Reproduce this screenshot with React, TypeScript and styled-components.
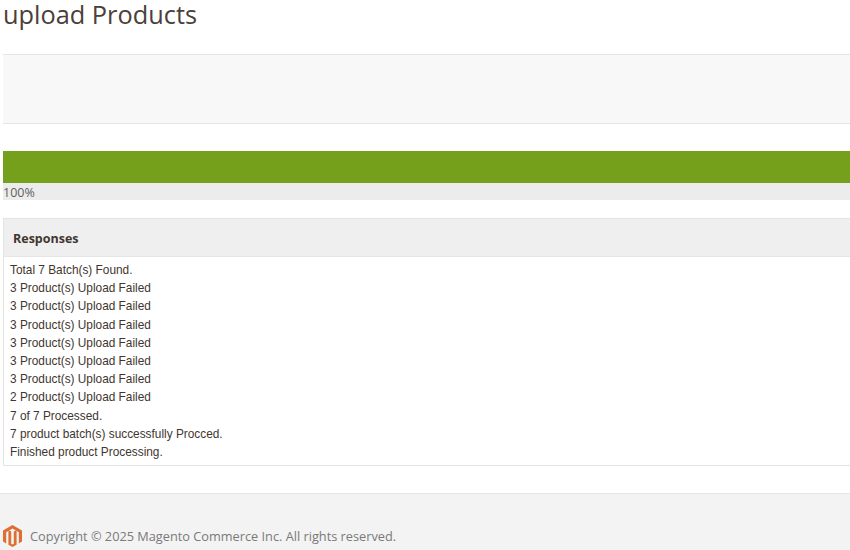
import { createGlobalStyle, styled } from "styled-components";

const messages = [
  "Total 7 Batch(s) Found.",
  "3 Product(s) Upload Failed",
  "3 Product(s) Upload Failed",
  "3 Product(s) Upload Failed",
  "3 Product(s) Upload Failed",
  "3 Product(s) Upload Failed",
  "3 Product(s) Upload Failed",
  "2 Product(s) Upload Failed",
  "7 of 7 Processed.",
  "7 product batch(s) successfully Procced.",
  "Finished product Processing.",
];

const GlobalStyle = createGlobalStyle`
  html, body {
    margin: 0;
    padding: 0;
    background: #fff;
    overflow: hidden;
  }
`;

const Page = styled.div`
  width: 850px;
  height: 550px;
  overflow: hidden;
  display: flex;
  flex-direction: column;
`;

const Main = styled.main`
  padding-left: 3px;
  display: flex;
  flex-direction: column;
`;

const Title = styled.h1`
  margin: 0;
  height: 54px;
  font: 400 25.35px/28px "Open Sans", sans-serif;
  color: #4a403a;
`;

const ActionBar = styled.div`
  height: 68px;
  background: #f8f8f8;
  border-top: 1px solid #e6e6e6;
  border-bottom: 1px solid #e6e6e6;
`;

const Progress = styled.div`
  margin-top: 27px;
  background: #ececec;
`;

const ProgressFill = styled.div`
  height: 32px;
  background: #75a01c;
`;

const ProgressLabel = styled.div`
  height: 17px;
  font: 400 12.5px/19px "Open Sans", sans-serif;
  color: #5f5f5f;
`;

const Panel = styled.section`
  margin-top: 18px;
  border: 1px solid #e3e3e3;
  border-right: 0;
  height: 248px;
  box-sizing: border-box;
`;

const PanelHeader = styled.h2`
  margin: 0;
  height: 38px;
  box-sizing: border-box;
  padding: 12px 0 0 9px;
  background: #efefef;
  border-bottom: 1px solid #e6e6e6;
  font: 700 12.5px/16px "Open Sans", sans-serif;
  color: #41362f;
`;

const PanelBody = styled.div`
  padding: 4px 0 0 6px;
`;

const Message = styled.div`
  font: 400 11.85px/18.2px "Liberation Sans", Arial, sans-serif;
  color: #41362f;
`;

const Footer = styled.footer`
  margin-top: 27px;
  flex: 1;
  display: flex;
  align-items: center;
  gap: 8px;
  padding: 27px 0 0 3px;
  box-sizing: border-box;
  background: #f3f3f3;
  border-top: 1px solid #e6e6e6;
`;

const Copyright = styled.span`
  font: 400 12.75px/18px "Open Sans", sans-serif;
  color: #7a7a7a;
`;

function MagentoLogo() {
  return (
    <svg width="19" height="22" viewBox="0 0 19 22" aria-hidden="true">
      <path
        fill="#dd6f35"
        d="M9.5 0 19 5.5v11l-3.2 1.9V7.3L9.5 3.6 3.2 7.3v11.1L0 16.5v-11Z"
      />
      <path
        fill="#dd6f35"
        d="M8.2 6.6v12.2l1.3.8 1.3-.8V6.6l2.8-1.6v14.8L9.5 22l-4.1-2.2V5Z"
      />
    </svg>
  );
}

export default function App() {
  return (
    <Page>
      <GlobalStyle />
      <Main>
        <Title>upload Products</Title>
        <ActionBar />
        <Progress>
          <ProgressFill />
          <ProgressLabel>100%</ProgressLabel>
        </Progress>
        <Panel>
          <PanelHeader>Responses</PanelHeader>
          <PanelBody>
            {messages.map((text, i) => (
              <Message key={i}>{text}</Message>
            ))}
          </PanelBody>
        </Panel>
      </Main>
      <Footer>
        <MagentoLogo />
        <Copyright>Copyright © 2025 Magento Commerce Inc. All rights reserved.</Copyright>
      </Footer>
    </Page>
  );
}
